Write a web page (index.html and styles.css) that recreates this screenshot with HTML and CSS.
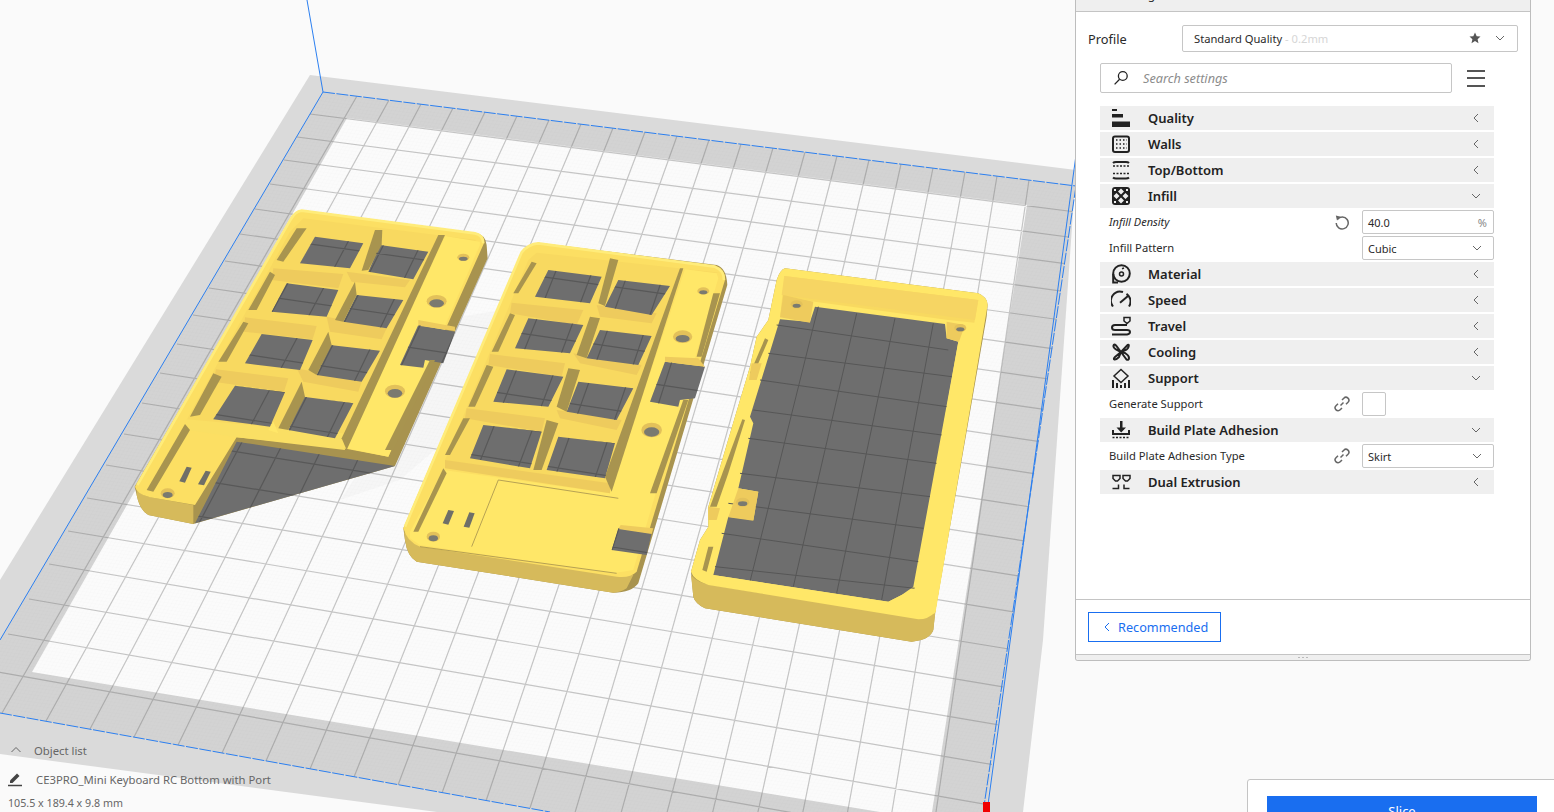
FILE: index.html
```html
<!DOCTYPE html>
<html lang="en">
<head>
<meta charset="utf-8">
<title>Cura</title>
<link rel="stylesheet" href="styles.css">
</head>
<body>
<main class="app">
<svg class="scene" viewBox="0 0 1554 812" width="1554" height="812" aria-hidden="true">
  <defs>
    <pattern id="fine" width="10" height="10" patternUnits="userSpaceOnUse" patternTransform="matrix(.37 .05 -.19 .33 0 0)">
      <path class="fine-line" d="M0 0H10M0 0V10"/>
    </pattern>
    <path id="grid" d="M357 96L2 713M389 100L46 721M421 104L90 729M453 108L134 737M485 112L178 745M517 116L222 753M549 120L266 761M581 124L310 769M613 128L354 777M645 132L398 785M677 136L442 793M709 140L486 801M741 144L530 808M773 148L574 816M805 152L618 824M837 156L662 832M869 160L706 840M901 164L750 848M933 168L794 856M965 172L838 864M997 176L882 872M1029 180L926 880M310 114L1076 212M297 137L1076 238M284 160L1076 265M270 184L1076 293M255 209L1076 322M240 234L1076 352M225 261L1076 383M209 288L1076 414M193 315L1076 447M177 344L1076 480M160 373L1076 514M142 403L1076 549M124 434L1076 585M106 465L1076 622M87 498L1076 660M68 531L1076 699M49 564L1076 738M29 599L1076 779M8 634L1076 820M-13 670L1076 863"/>
    <path id="w1" d="M555 110L700 130L660 205L510 190ZM750 135L895 155L850 238L715 215ZM470 250L625 270L590 350L425 335ZM680 285L820 300L770 385L640 365ZM395 402L548 420L510 510L345 490ZM600 435L750 452L695 545L560 525ZM315 557L465 577L420 680L250 658ZM520 590L670 610L615 715L475 690ZM865 375L975 395L940 490L885 480L880 503L810 495ZM320 725L795 798L195 970Z"/>
    <path id="w2" d="M445 120L605 140L570 220L405 200ZM655 150L810 168L755 255L615 230ZM385 265L550 285L510 370L345 355ZM600 300L755 318L715 405L560 385ZM320 418L490 440L445 530L280 515ZM535 455L700 475L650 570L500 545ZM250 585L425 605L390 715L210 685ZM475 620L645 640L615 745L440 720ZM795 395L915 410L885 505L840 510L835 530L750 515ZM655 895L755 910L740 975L635 960Z"/>
    <clipPath id="holes">
      <use href="#w1" transform="matrix(.3333 0 0 .3333 130 200)"/>
      <use href="#w2" transform="matrix(.3333 0 0 .3333 400 230)"/>
    </clipPath>
    <clipPath id="bed"><polygon points="323,92 1076,186 985,812 550,812 0,713 0,640"/></clipPath>
  </defs>

  <polygon class="band-light" points="310,75 1076,170 1043,640 1023,812 437,812 0,754 0,580"/>
  <polygon class="band-dark" points="323,92 1076,186 985,812 550,812 0,713 0,640"/>
  <polygon class="plate" points="347,118 1027,205 932,812 880,812 32,672"/>
  <polygon class="fine-fill" points="323,92 1076,186 985,812 550,812 0,713 0,640"/>
  <use href="#grid" class="grid-lines" clip-path="url(#bed)"/>
  <polygon class="ghost" points="440,320 500,310 470,420 400,480 340,500 380,440"/>

  <g class="axes">
    <path d="M307 0L323 92"/>
    <path class="dashed" d="M323 92L1076 186"/>
    <path d="M323 92L0 640"/>
    <path class="dashed" d="M0 713L550 812"/>
    <path d="M1076 155L987 812"/>
    <path class="dashed" d="M1076 186L984 806"/>
  </g>
  <rect class="origin" x="983" y="802" width="7" height="10"/>

  <!-- left part -->
  <g transform="matrix(.3333 0 0 .3333 130 200)">
    <path class="wall" d="M515 30L1035 98Q1068 104 1070 135L1073 175L795 798L190 972L55 945Q30 932 20 885L14 860L480 60Q495 32 515 30Z"/>
    <path class="front" d="M20 870Q40 890 70 893L190 915L190 972L55 945Q30 932 20 885Z"/>
    <path class="top" d="M515 30L1035 98Q1062 103 1062 130L775 770L640 745L320 712L195 915L60 892Q20 882 15 860L480 60Q495 32 515 30Z"/>
    <polygon class="pocket" points="520,55 1040,120 1020,130 925,108 640,725 170,660 480,95"/>
    <polygon class="rib" points="430,205 640,222 625,265 425,240"/>
    <polygon class="rib" points="650,215 840,240 825,262 665,245"/>
    <polygon class="rib" points="345,352 560,378 548,418 340,395"/>
    <polygon class="rib" points="590,350 770,385 755,418 600,395"/>
    <polygon class="rib" points="258,508 475,535 462,575 250,545"/>
    <polygon class="rib" points="500,505 695,545 685,575 520,545"/>
    <polygon class="bright" points="170,658 640,700 645,750 320,712 170,690"/>
    <polygon class="top-bright" points="945,108 1050,125 1050,135 775,770 650,745"/>
    <use href="#w1" class="floor"/>
    <polygon class="shade" points="925,105 945,105 650,750 635,715"/>
    <polygon class="shade" points="500,85 530,85 460,185 440,180"/>
    <polygon class="shade" points="420,215 435,225 380,330 355,330"/>
    <polygon class="shade" points="340,365 355,370 290,485 265,485"/>
    <polygon class="shade" points="250,520 275,530 210,645 180,650"/>
    <polygon class="shade" points="735,90 757,90 755,135 715,210 695,212"/>
    <polygon class="shade" points="675,245 680,285 640,365 615,360"/>
    <polygon class="shade" points="595,395 605,435 560,525 535,510"/>
    <polygon class="shade" points="515,545 525,590 475,690 445,685"/>
    <polygon class="shade" points="165,672 180,690 70,875 50,870"/>
    <polygon class="shade" points="900,480 915,480 790,750 765,750"/>
    <polygon class="top-bright" points="415,690 430,665 445,700"/>
    <polygon class="rib" points="865,360 975,380 975,393 865,377"/>
    <path class="edge" d="M22 855L480 62Q495 34 515 32L1035 100Q1060 105 1060 130"/>
    <ellipse class="rim" cx="920" cy="304" rx="30" ry="19"/><ellipse class="bore" cx="920" cy="310" rx="22" ry="12"/>
    <ellipse class="rim" cx="795" cy="574" rx="30" ry="20"/><ellipse class="bore" cx="795" cy="580" rx="22" ry="13"/>
    <ellipse class="rim" cx="1000" cy="172" rx="18" ry="11"/><ellipse class="bore" cx="1000" cy="176" rx="13" ry="6"/>
    <ellipse class="rim" cx="113" cy="880" rx="21" ry="15"/><ellipse class="bore" cx="113" cy="885" rx="15" ry="9"/>
    <polygon class="slot" points="170,800 185,803 165,848 148,844"/>
    <polygon class="slot" points="227,812 242,815 222,856 204,853"/>
  </g>

  <!-- middle part -->
  <g transform="matrix(.3333 0 0 .3333 400 230)">
    <path class="wall" d="M415 38L950 105Q980 115 982 165L715 1060Q695 1088 640 1088L50 995Q22 980 15 930L10 895L365 65Q385 40 415 38Z"/>
    <path class="front" d="M12 905Q30 935 70 945L690 1030L700 1035L680 1075Q660 1088 640 1088L50 995Q22 980 15 930Z"/>
    <path class="top" d="M415 38L945 108Q978 120 975 150L710 1025Q690 1045 650 1040L60 950Q20 935 10 895L365 65Q385 40 415 38Z"/>
    <polygon class="pocket" points="410,68 960,128 940,130 840,115 630,780 135,690 385,90"/>
    <polygon class="rib" points="335,218 550,240 530,285 330,250"/>
    <polygon class="rib" points="590,225 770,250 755,280 600,260"/>
    <polygon class="rib" points="270,372 495,400 485,440 265,405"/>
    <polygon class="rib" points="520,370 725,405 710,435 540,400"/>
    <polygon class="rib" points="200,535 435,565 425,605 195,565"/>
    <polygon class="rib" points="470,540 665,570 650,600 480,565"/>
    <polygon class="top-bright" points="855,118 950,130 955,145 700,1020 640,1030 60,945 30,925 30,905 130,720 630,790"/>
    <polygon class="rib" points="135,690 630,760 630,790 135,715"/>
    <use href="#w2" class="floor"/>
    <polygon class="shade" points="840,115 850,115 635,785 615,740"/>
    <polygon class="shade" points="395,95 410,100 355,190 340,190"/>
    <polygon class="shade" points="330,250 345,255 295,365 275,365"/>
    <polygon class="shade" points="260,405 280,410 225,530 205,530"/>
    <polygon class="shade" points="190,565 210,565 150,675 135,675"/>
    <polygon class="shade" points="130,715 140,730 55,905 40,905"/>
    <polygon class="shade" points="630,85 655,90 615,228 595,220"/>
    <polygon class="shade" points="570,260 600,265 560,385 530,375"/>
    <polygon class="shade" points="505,415 540,420 500,545 470,530"/>
    <polygon class="shade" points="440,570 475,580 425,720 400,720"/>
    <polygon class="shade" points="850,510 865,510 770,790 750,790"/>
    <polygon class="shade" points="940,190 960,190 905,380 890,380"/>
    <polygon class="rib" points="795,380 895,385 915,410 795,395"/>
    <polygon class="rib" points="662,885 760,895 755,912 655,897"/>
    <path class="seam" d="M295 750L215 950M295 750L655 805M60 950L650 1030"/>
    <path class="edge" d="M15 890L365 67Q385 42 415 40L945 110Q972 120 972 150"/>
    <ellipse class="rim" cx="848" cy="320" rx="29" ry="19"/><ellipse class="bore" cx="848" cy="326" rx="21" ry="11"/>
    <ellipse class="rim" cx="755" cy="600" rx="31" ry="22"/><ellipse class="bore" cx="755" cy="606" rx="23" ry="14"/>
    <ellipse class="rim" cx="910" cy="183" rx="18" ry="11"/><ellipse class="bore" cx="910" cy="187" rx="12" ry="6"/>
    <ellipse class="rim" cx="100" cy="920" rx="20" ry="15"/><ellipse class="bore" cx="100" cy="925" rx="14" ry="9"/>
    <polygon class="slot" points="145,840 162,843 145,884 128,880"/>
    <polygon class="slot" points="208,847 224,850 208,893 191,890"/>
  </g>

  <!-- right part -->
  <g transform="matrix(.3333 0 0 .3333 685 260)">
    <path class="wall" d="M300 25L880 100Q908 112 908 135L905 170L750 1060L745 1110Q735 1140 680 1145L60 1045Q30 1030 25 1010L18 935L45 840L70 800L70 740L150 470L195 320L215 230L250 180L275 60Q285 30 300 25Z"/>
    <path class="front" d="M18 945Q40 970 80 975L700 1075L752 1050L745 1110Q735 1140 680 1145L60 1045Q30 1030 25 1010Z"/>
    <path class="top-bright" d="M300 25L880 100Q908 112 908 135L752 1055Q730 1078 700 1078L70 975Q25 960 18 935L45 840L70 800L70 740L150 470L195 320L215 230L250 180L275 60Q285 30 300 25Z"/>
    <polygon class="pocket" points="298,48 880,120 868,188 790,180 390,125 300,108 285,178"/>
    <polygon class="wall-light" points="298,48 290,105 870,180 880,120"/>
    <polygon class="floor" points="285,178 375,186 390,140 780,192 785,235 820,245 685,980 650,1005 610,1025 85,945 130,770 205,780 220,695 160,685 205,490 195,470"/>
    <path class="floor-lines" d="M400 140L195 965M515 160L325 980M630 175L455 1000M745 190L590 1020M275 195L790 270M250 280L800 350M225 360L785 440M205 450L770 525M190 535L755 610M165 640L735 710M130 730L715 805M110 820L700 905M90 920L690 985"/>
    <polygon class="top-bright" points="610,1025 650,1005 690,985 820,245 900,170 750,1060 700,1070 85,960 85,945"/>
    <polygon class="rib" points="295,105 385,125 375,188 285,172"/>
    <polygon class="rib" points="785,185 840,195 822,245 785,235"/>
    <polygon class="rib" points="160,685 220,695 205,782 130,772"/>
    <polygon class="shade" points="240,235 250,240 205,345 195,340"/>
    <polygon class="shade" points="172,478 180,480 130,640 95,740 75,740"/>
    <polygon class="shade" points="70,860 85,860 65,935 52,930"/>
    <polygon class="rib" points="200,310 230,310 215,360 192,360"/>
    <polygon class="rib" points="70,740 105,745 95,780 70,780"/>
    <ellipse class="rim" cx="335" cy="133" rx="18" ry="12"/><ellipse class="bore" cx="335" cy="137" rx="12" ry="6"/>
    <ellipse class="rim" cx="826" cy="204" rx="18" ry="12"/><ellipse class="bore" cx="826" cy="208" rx="12" ry="6"/>
    <ellipse class="rim" cx="173" cy="727" rx="20" ry="14"/><ellipse class="bore" cx="173" cy="731" rx="14" ry="7"/>
  </g>
  <use href="#grid" class="under-lines" clip-path="url(#holes)"/>
</svg>

<section class="object-info">
  <div class="obj-head">
    <svg class="i-up" viewBox="0 0 12 8" width="12" height="8"><path d="M1.5 6L6 1.5L10.5 6"/></svg>
    <span>Object list</span>
  </div>
  <div class="obj-name">
    <svg class="i-pen" viewBox="0 0 16 16" width="16" height="16"><path class="pen-body" d="M3 12V9.500L10 2.500L12.500 5L5.500 12Z"/><path d="M1 14.500H15"/></svg>
    <span>CE3PRO_Mini Keyboard RC Bottom with Port</span>
  </div>
  <div class="obj-size">105.5 x 189.4 x 9.8 mm</div>
</section>

<aside class="panel">
  <header class="panel-head">Print settings</header>
  <div class="panel-body">
    <div class="profile">
      <span class="profile-label">Profile</span>
      <div class="profile-select">
        <span class="profile-name">Standard Quality</span><span class="profile-layer">&nbsp;- 0.2mm</span>
        <svg class="i-star" viewBox="0 0 12 12" width="12" height="12"><path d="M6 .6L7.7 4.2L11.5 4.6L8.6 7.2L9.5 11.2L6 9.1L2.5 11.2L3.4 7.2L.5 4.6L4.3 4.2Z"/></svg>
        <svg class="chev chev-select" viewBox="0 0 10 6" width="10" height="6"><path d="M1 1L5 5L9 1"/></svg>
      </div>
    </div>
    <div class="search-row">
      <div class="search">
        <svg class="i-search" viewBox="0 0 16 16" width="16" height="16"><circle cx="9.800" cy="6" r="4.400"/><path d="M6.600 9.200L1.600 14.400"/></svg>
        <span>Search settings</span>
      </div>
      <div class="menu"><i></i><i></i><i></i></div>
    </div>

    <div class="settings">
      <div class="cat">
        <svg class="ic" viewBox="0 0 20 20"><path class="fill" d="M1 1h5v2H1zM1 6h11v3.500H1zM1 13.500h18V19H1z"/></svg>
        <span class="cat-name">Quality</span>
        <svg class="chev" viewBox="0 0 6 10" width="6" height="10"><path d="M5 1L1 5L5 9"/></svg>
      </div>
      <div class="cat">
        <svg class="ic" viewBox="0 0 20 20"><rect class="line" x="2" y="2.500" width="16" height="15.500" rx="2"/><path class="dots" d="M5 6H16M5 10H16M5 14H16"/></svg>
        <span class="cat-name">Walls</span>
        <svg class="chev" viewBox="0 0 6 10" width="6" height="10"><path d="M5 1L1 5L5 9"/></svg>
      </div>
      <div class="cat">
        <svg class="ic" viewBox="0 0 20 20"><path class="line" d="M2 3Q3 2 5 2H15Q17 2 18 3M2 17.500Q3 18.500 5 18.500H15Q17 18.500 18 17.500"/><path class="dots2" d="M2 6H18M2 13.500H18"/></svg>
        <span class="cat-name">Top/Bottom</span>
        <svg class="chev" viewBox="0 0 6 10" width="6" height="10"><path d="M5 1L1 5L5 9"/></svg>
      </div>
      <div class="cat">
        <svg class="ic" viewBox="0 0 20 20"><rect class="fill" x="1" y="1" width="18" height="18" rx="3"/><path class="knock" d="M10 2.500L13 5.500L10 8.500L7 5.500ZM10 11.500L13 14.500L10 17.500L7 14.500ZM5.500 7L8.500 10L5.500 13L2.500 10ZM14.500 7L17.500 10L14.500 13L11.500 10Z"/><path class="knock" d="M3 3h2v2H3zM15 3h2v2h-2zM3 15h2v2H3zM15 15h2v2h-2z"/></svg>
        <span class="cat-name">Infill</span>
        <svg class="chev" viewBox="0 0 10 6" width="10" height="6"><path d="M1 1L5 5L9 1"/></svg>
      </div>
      <div class="row">
        <span class="row-label changed">Infill Density</span>
        <svg class="i-small" viewBox="0 0 16 16" width="16" height="16"><path d="M3.500 5.200A6 6 0 1 1 2.200 9"/><path class="fill-grey" d="M1.800 1.500L6.800 2.800L3 6.500Z"/></svg>
        <div class="field"><span>40.0</span><span class="unit">%</span></div>
      </div>
      <div class="row">
        <span class="row-label">Infill Pattern</span>
        <div class="field"><span>Cubic</span><svg class="chev chev-field" viewBox="0 0 10 6" width="10" height="6"><path d="M1 1L5 5L9 1"/></svg></div>
      </div>
      <div class="cat">
        <svg class="ic" viewBox="0 0 20 20"><circle class="line" cx="10.500" cy="9.500" r="8.300"/><path class="line" d="M2.200 10V18.500H7"/><circle class="line thin" cx="10.500" cy="10" r="2"/><path class="line thin" d="M11 4.800L13 4"/></svg>
        <span class="cat-name">Material</span>
        <svg class="chev" viewBox="0 0 6 10" width="6" height="10"><path d="M5 1L1 5L5 9"/></svg>
      </div>
      <div class="cat">
        <svg class="ic" viewBox="0 0 20 20"><path class="line" d="M2 16.500A9.200 9.200 0 0 1 12 2M15.500 3.800A9.200 9.200 0 0 1 18 16.500"/><path class="line" d="M9 12.700L17 6"/></svg>
        <span class="cat-name">Speed</span>
        <svg class="chev" viewBox="0 0 6 10" width="6" height="10"><path d="M5 1L1 5L5 9"/></svg>
      </div>
      <div class="cat">
        <svg class="ic" viewBox="0 0 20 20"><path class="line thin" d="M13 1.500H19V5L16 7.500L13 5Z"/><path class="line" d="M16 9H4Q1 9 1 11.500T4 14H16Q19 14 19 16T16 18.500H1"/></svg>
        <span class="cat-name">Travel</span>
        <svg class="chev" viewBox="0 0 6 10" width="6" height="10"><path d="M5 1L1 5L5 9"/></svg>
      </div>
      <div class="cat">
        <svg class="ic" viewBox="0 0 20 20"><path class="line" d="M10 10L5 3.500Q3 1.500 2.500 3.500T5 7.500ZM10 10L16.500 3Q18.500 2 17.500 5T13 8.500ZM10 10L4 15Q2 17 3.500 17.500T8 15ZM10 10L15.500 17.500Q18 18.500 18 16T14 11Z"/></svg>
        <span class="cat-name">Cooling</span>
        <svg class="chev" viewBox="0 0 6 10" width="6" height="10"><path d="M5 1L1 5L5 9"/></svg>
      </div>
      <div class="cat">
        <svg class="ic" viewBox="0 0 20 20"><path class="line thin" d="M10 1.500L17 8L10 14.500L3 8Z"/><path class="line" d="M2 20V12M6 20V15M10 20V17M14 20V15M18 20V12"/></svg>
        <span class="cat-name">Support</span>
        <svg class="chev" viewBox="0 0 10 6" width="10" height="6"><path d="M1 1L5 5L9 1"/></svg>
      </div>
      <div class="row">
        <span class="row-label">Generate Support</span>
        <svg class="i-small" viewBox="0 0 16 16" width="16" height="16"><path d="M6.500 9.500L9.500 6.500M8 4L9.800 2.200A2.900 2.900 0 0 1 14 6.300L12 8.200M8 12L6.200 13.800A2.900 2.900 0 0 1 2 9.700L4 7.800"/></svg>
        <div class="check"></div>
      </div>
      <div class="cat">
        <svg class="ic" viewBox="0 0 20 20"><path class="fill" d="M9 1h2.500v6.500H15L10.200 12.500L5.500 7.500H9z"/><path class="line" d="M2 10V14H18V10"/><path class="dots2" d="M1.500 17.500H19"/></svg>
        <span class="cat-name">Build Plate Adhesion</span>
        <svg class="chev" viewBox="0 0 10 6" width="10" height="6"><path d="M1 1L5 5L9 1"/></svg>
      </div>
      <div class="row">
        <span class="row-label">Build Plate Adhesion Type</span>
        <svg class="i-small" viewBox="0 0 16 16" width="16" height="16"><path d="M6.500 9.500L9.500 6.500M8 4L9.800 2.200A2.900 2.900 0 0 1 14 6.300L12 8.200M8 12L6.200 13.800A2.900 2.900 0 0 1 2 9.700L4 7.800"/></svg>
        <div class="field"><span>Skirt</span><svg class="chev chev-field" viewBox="0 0 10 6" width="10" height="6"><path d="M1 1L5 5L9 1"/></svg></div>
      </div>
      <div class="cat">
        <svg class="ic" viewBox="0 0 20 20"><path class="line thin" d="M2 3.500H9V6.500L6.500 9H4.500L2 6.500ZM12 3.500H19V6.500L16.500 9H14.500L12 6.500Z"/><path class="line thin" d="M1.500 16.500H7.500V12.500M18.500 16.500H13V12.500"/></svg>
        <span class="cat-name">Dual Extrusion</span>
        <svg class="chev" viewBox="0 0 6 10" width="6" height="10"><path d="M5 1L1 5L5 9"/></svg>
      </div>
    </div>
  </div>
  <footer class="panel-foot">
    <button class="mode" type="button">
      <svg class="chev-blue" viewBox="0 0 6 10" width="6" height="10"><path d="M5 1L1 5L5 9"/></svg>
      <span>Recommended</span>
    </button>
  </footer>
  <div class="grip"><i></i><i></i><i></i></div>
</aside>

<section class="slice-card">
  <button class="slice" type="button">Slice</button>
</section>
</main>
</body>
</html>
```

FILE: styles.css
```css
* { box-sizing: border-box; }
html, body { margin: 0; padding: 0; height: 100%; overflow: hidden; }
body { background: #fafafa; font-family: "Noto Sans", sans-serif; color: #2a2a2a; }
.app { position: relative; width: 1554px; height: 812px; overflow: hidden; }
.scene { display: block; }

/* build plate */
.band-light { fill: #dadada; }
.band-dark { fill: #d3d3d3; }
.plate { fill: #fbfbfb; }
.fine-fill { fill: url(#fine); }
.fine-line { stroke: #000; stroke-width: 1.5; opacity: .03; fill: none; }
.grid-lines { fill: none; stroke: #6e6e6e; stroke-opacity: .38; stroke-width: 1.2; }
.ghost { fill: #000; opacity: .02; }
.axes path { fill: none; stroke: #2b7ff0; stroke-width: 1; }
.axes .dashed { stroke-dasharray: 12 1.5; }
.origin { fill: #f00000; }

/* printed parts */
.wall { fill: #a8934f; }
.wall-light { fill: #f6d563; }
.front { fill: #d6ba5b; }
.top { fill: #fcdf63; }
.top-bright { fill: #ffe768; }
.pocket { fill: #f8d960; }
.rib { fill: #eecb5d; }
.bright { fill: #fadf64; }
.shade { fill: #a8944f; }
.seam { fill: none; stroke: #a8944f; stroke-width: 2.500; }
.edge { fill: none; stroke: #ffec7a; stroke-width: 8; }
.rim { fill: #e3c15a; }
.bore { fill: #7a7a70; }
.slot { fill: #6f6f68; }
.floor { fill: #6e6e6e; }
.floor-lines { fill: none; stroke: #565656; stroke-width: 3; }
.under-lines { fill: none; stroke: #585858; stroke-width: 1.2; }

/* bottom-left info */
.object-info { position: absolute; left: 8px; top: 742px; width: 320px; font-size: 11.300px; color: #666; }
.obj-head { display: flex; align-items: center; height: 16px; padding-left: 2px; gap: 12px; }
.obj-name { display: flex; align-items: center; height: 16px; margin-top: 13px; gap: 13px; }
.obj-size { margin-top: 8px; line-height: 16px; font-size: 10.700px; }
.i-up path { fill: none; stroke: #666; stroke-width: 1; }
.i-pen path { fill: none; stroke: #444; stroke-width: 1.500; }
.i-pen .pen-body { fill: #444; stroke: none; }
.i-pen { margin-left: -1px; }

/* settings panel */
.panel { position: absolute; left: 1075px; top: -19px; width: 456px; height: 680px; display: flex; flex-direction: column; background: #fff; border: 1px solid #bdbdbd; border-top: 0; border-radius: 0 0 3px 3px; }
.panel-head { height: 31px; flex: none; padding: 6px 0 0 10px; background: #efefef; border-bottom: 1px solid #c4c4c4; font-size: 12px; line-height: 16px; color: #333; }
.panel-body { flex: 1; padding: 12px 0 0; }
.profile { display: flex; align-items: center; height: 28px; padding: 0 12px; }
.profile-label { width: 94px; padding-top: 2px; font-size: 12.800px; }
.profile-select { flex: 1; height: 27px; display: flex; align-items: center; padding: 0 12px 0 11px; border: 1px solid #c6c6c6; border-radius: 2px; font-size: 11.200px; }
.profile-layer { color: #d6d6d6; flex: 1; }
.i-star path { fill: #555; }
.chev-select { margin-left: 14px; }
.chev path, .chev-field path { fill: none; stroke: #666; stroke-width: 1; }
.search-row { display: flex; align-items: center; margin: 11px 0 0 24px; }
.search { width: 352px; height: 30px; display: flex; align-items: center; padding-left: 12px; gap: 14px; border: 1px solid #c6c6c6; border-radius: 2px; font-size: 12.700px; font-style: italic; color: #8c8c8c; }
.i-search { flex: none; }
.i-search circle, .i-search path { fill: none; stroke: #222; stroke-width: 1.300; }
.menu { margin-left: 15px; width: 18px; display: flex; flex-direction: column; gap: 5.500px; }
.menu i { display: block; height: 2px; background: #555; }
.settings { width: 394px; margin: 13px 0 0 24px; display: flex; flex-direction: column; gap: 2px; }
.cat { height: 24px; display: flex; align-items: center; padding-left: 11px; background: #efefef; }
.ic { width: 20px; height: 20px; flex: none; }
.ic .fill { fill: #222; }
.ic .line { fill: none; stroke: #222; stroke-width: 2; }
.ic .line.thin { stroke-width: 1.500; }
.ic .dots { fill: none; stroke: #222; stroke-width: 1.500; stroke-dasharray: 1.500 2; }
.ic .dots2 { fill: none; stroke: #222; stroke-width: 1.500; stroke-dasharray: 2 1.500; }
.ic .knock { fill: #efefef; }
.cat-name { flex: 1; margin-left: 17px; font-size: 13px; font-weight: 600; color: #222; }
.cat .chev { width: 10px; margin-right: 13px; }
.row { height: 24px; display: flex; align-items: center; padding: 0 0 2px 9px; font-size: 11.200px; }
.row-label { flex: 1; }
.changed { font-style: italic; font-size: 11px; }
.i-small { flex: none; margin: 2px 12px 0 0; }
.i-small path { fill: none; stroke: #666; stroke-width: 1.500; }
.i-small .fill-grey { fill: #666; stroke: none; }
.field { width: 132px; height: 24px; flex: none; margin-bottom: -2px; display: flex; align-items: center; justify-content: space-between; padding: 0 11px 0 5px; border: 1px solid #c6c6c6; border-radius: 2px; font-size: 11px; }
.field .unit { color: #888; margin-right: -5px; }
.check { width: 24px; height: 24px; margin: 0 108px -2px 0; flex: none; border: 1px solid #c6c6c6; border-radius: 2px; }
.panel-foot { height: 55px; flex: none; display: flex; align-items: flex-start; padding: 12px 12px 0; border-top: 1px solid #c4c4c4; }
.mode { width: 133px; height: 30px; display: flex; align-items: center; gap: 8px; padding: 0 0 0 15px; background: #fff; border: 1px solid #196ef0; color: #196ef0; font-family: "Noto Sans", sans-serif; font-size: 12.700px; }
.chev-blue path { fill: none; stroke: #196ef0; stroke-width: 1; }
.grip { height: 6px; flex: none; display: flex; justify-content: center; align-items: center; gap: 2px; background: #efefef; border-top: 1px solid #c4c4c4; border-radius: 0 0 3px 3px; }
.grip i { width: 2px; height: 1px; background: #bbb; }

/* slice */
.slice-card { position: absolute; left: 1247px; top: 779px; width: 320px; height: 80px; padding: 16px 0 0 19px; background: #fff; border: 1px solid #c4c4c4; border-radius: 3px 0 0 0; }
.slice { display: block; width: 270px; height: 30px; border: 0; padding: 0; background: #196ef0; color: #fff; font-family: "Noto Sans", sans-serif; font-size: 13px; }
```
